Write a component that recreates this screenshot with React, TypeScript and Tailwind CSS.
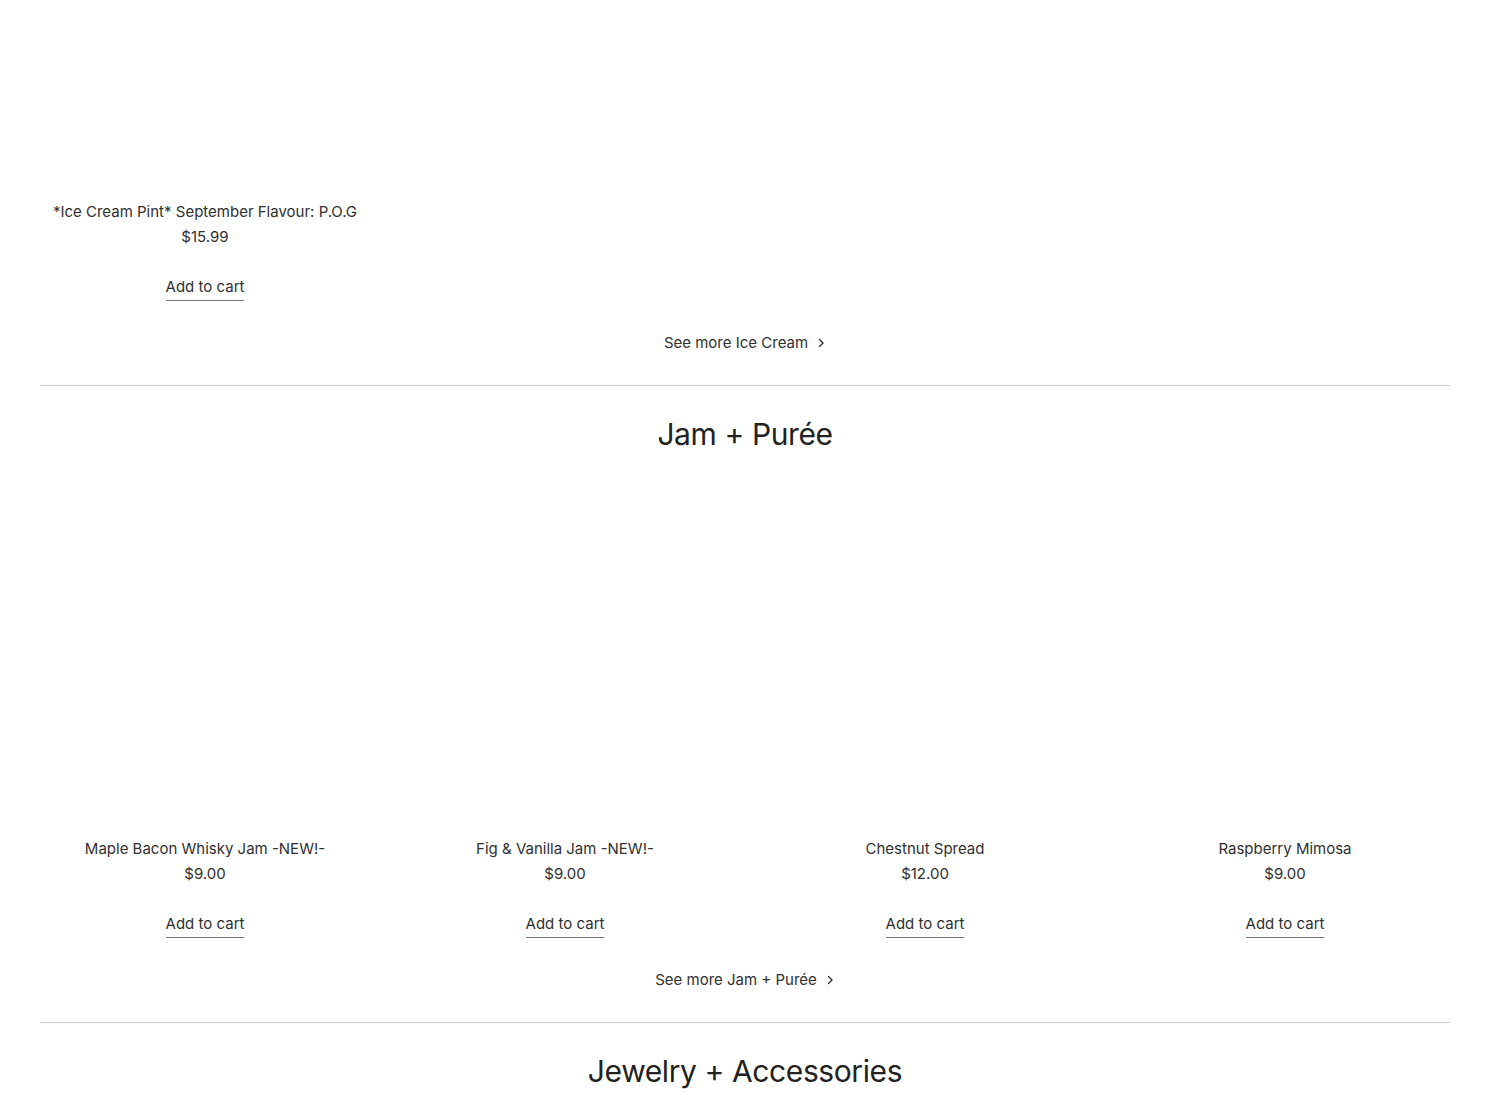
import React from 'react'

type Product = {
    title: string
    price: string
}

const iceCream: Product[] = [
    { title: '*Ice Cream Pint* September Flavour: P.O.G', price: '$15.99' },
]

const jams: Product[] = [
    { title: 'Maple Bacon Whisky Jam -NEW!-', price: '$9.00' },
    { title: 'Fig & Vanilla Jam -NEW!-', price: '$9.00' },
    { title: 'Chestnut Spread', price: '$12.00' },
    { title: 'Raspberry Mimosa', price: '$9.00' },
]

const Chevron = () => (
    <svg
        width="10"
        height="10"
        viewBox="0 0 10 10"
        fill="none"
        stroke="currentColor"
        strokeWidth="1.4"
        strokeLinecap="round"
        strokeLinejoin="round"
    >
        <path d="M3.5 1.5 7 5 3.5 8.5" />
    </svg>
)

const ProductCard = ({
    product,
    imageHeight,
}: {
    product: Product
    imageHeight: string
}) => (
    <div className="flex flex-col items-center text-center">
        <div className={`w-full ${imageHeight}`} />
        <div className="mt-[22px] text-[15px] leading-[25px]">
            {product.title}
        </div>
        <div className="text-[15px] leading-[25px]">{product.price}</div>
        <button className="mt-[26px] border-b border-[#777] pb-[1px] text-[15px] leading-[24px]">
            Add to cart
        </button>
    </div>
)

const SeeMore = ({ label }: { label: string }) => (
    <div className="mt-[30px] flex justify-center">
        <a className="flex items-center gap-[8px] text-[15px] leading-[24px]">
            {label}
            <Chevron />
        </a>
    </div>
)

export default function App() {
    return (
        <div
            className="min-h-screen bg-white text-[#303030] antialiased"
            style={{ fontFamily: 'Inter, "Noto Sans", sans-serif' }}
        >
            <div className="mx-[40px]">
                {/* Ice cream section (tail end) */}
                <section className="pb-[30px]">
                    <div className="grid grid-cols-4 gap-[30px]">
                        {iceCream.map((p) => (
                            <ProductCard
                                key={p.title}
                                product={p}
                                imageHeight="h-[177px]"
                            />
                        ))}
                    </div>
                    <SeeMore label="See more Ice Cream" />
                </section>

                <div className="border-t border-[#cfcfcf]" />

                {/* Jam section */}
                <section className="pb-[30px] pt-[27px]">
                    <h2 className="text-center text-[30px] leading-[42px] tracking-[-0.4px] text-[#222]">
                        Jam + Purée
                    </h2>
                    <div className="mt-[29px] grid grid-cols-4 gap-[30px]">
                        {jams.map((p) => (
                            <ProductCard
                                key={p.title}
                                product={p}
                                imageHeight="h-[330px]"
                            />
                        ))}
                    </div>
                    <SeeMore label="See more Jam + Purée" />
                </section>

                <div className="border-t border-[#cfcfcf]" />

                <section className="pt-[27px]">
                    <h2 className="text-center text-[30px] leading-[42px] tracking-[-0.4px] text-[#222]">
                        Jewelry + Accessories
                    </h2>
                    <div className="h-[400px]" />
                </section>
            </div>
        </div>
    )
}
